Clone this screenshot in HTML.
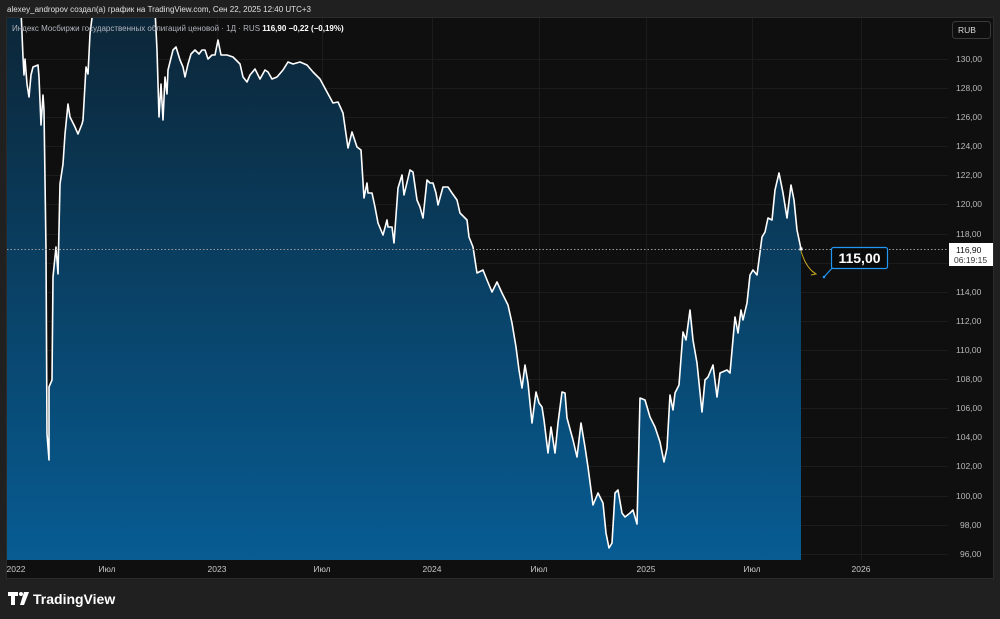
<!DOCTYPE html>
<html><head><meta charset="utf-8"><style>
html,body{margin:0;padding:0;background:#202020;width:1000px;height:619px;overflow:hidden;font-family:"Liberation Sans","Noto Sans CJK SC",sans-serif}
svg{position:absolute;left:0;top:0}
</style></head><body>
<svg width="1000" height="619" viewBox="0 0 1000 619" xmlns="http://www.w3.org/2000/svg" font-family="Liberation Sans, DejaVu Sans, sans-serif">
<defs>
<linearGradient id="g" x1="0" y1="17" x2="0" y2="560" gradientUnits="userSpaceOnUse">
<stop offset="0" stop-color="#0c2638"/><stop offset="1" stop-color="#075c93"/>
</linearGradient>
<clipPath id="c"><rect x="7" y="18" width="941" height="542"/></clipPath>
</defs>
<rect width="1000" height="619" fill="#202020"/>
<text x="7" y="12" font-size="8" fill="#e0e0e0">alexey_andropov создал(а) график на TradingView.com, Сен 22, 2025 12:40 UTC+3</text>
<rect x="6.5" y="17.5" width="987" height="561" fill="#0f0f0f" stroke="#2b2b2b"/>
<g stroke="#1c1c1c" stroke-width="1">
<path d="M7 59.5H948M7 88.5H948M7 117.5H948M7 146.5H948M7 175.5H948M7 204.5H948M7 234.5H948M7 263.5H948M7 292.5H948M7 321.5H948M7 350.5H948M7 379.5H948M7 408.5H948M7 437.5H948M7 466.5H948M7 496.5H948M7 525.5H948M7 554.5H948"/>
<path d="M107.5 18V560M217.5 18V560M322.5 18V560M432.5 18V560M539.5 18V560M646.5 18V560M752.5 18V560M861.5 18V560"/>
</g>
<g clip-path="url(#c)">
<path fill="url(#g)" d="M7,10 L21,10 L23,57 L24,75 L25,59 L27,84 L29,97 L31,75 L33,67 L38,65 L39,77 L41,125 L43,95 L44,110 L46,250 L47,434 L49,460 L49,387 L52,380 L53,277 L56,247 L58,274 L60,184 L63,164 L65,134 L68,104 L70,117 L75,127 L78,134 L82,124 L83,120 L86,67 L88,74 L90,34 L93,10 L155,10 L157,50 L159,117 L161,84 L163,120 L165,77 L167,94 L168,70 L173,50 L176,47 L180,60 L183,67 L185,77 L188,64 L191,54 L195,50 L199,54 L202,50 L205,50 L208,59 L212,55 L215,55 L218,40 L221,55 L227,55 L233,57 L240,64 L243,77 L247,82 L250,75 L255,69 L260,79 L265,70 L268,72 L272,79 L277,77 L283,70 L288,62 L293,64 L300,62 L307,65 L313,72 L320,79 L327,92 L333,103 L338,102 L343,113 L348,148 L352,132 L357,147 L361,150 L364,198 L367,183 L368,193 L372,193 L375,207 L378,223 L383,235 L387,220 L388,227 L392,227 L394,243 L398,188 L402,175 L404,195 L410,170 L413,172 L417,200 L420,207 L423,218 L427,180 L430,183 L433,183 L436,193 L438,205 L443,187 L448,187 L452,193 L457,200 L460,213 L467,220 L469,237 L473,247 L477,273 L483,270 L487,280 L492,292 L497,282 L502,293 L508,305 L512,323 L516,347 L519,370 L522,388 L525,365 L528,383 L532,423 L536,392 L539,403 L542,407 L544,420 L548,453 L551,427 L555,453 L558,423 L562,392 L565,393 L567,418 L573,440 L577,457 L581,423 L585,447 L588,467 L593,505 L598,493 L603,503 L606,533 L609,548 L612,543 L615,493 L618,490 L622,513 L625,517 L630,513 L633,510 L637,524 L640,398 L645,400 L650,417 L655,427 L660,442 L664,462 L667,448 L670,395 L673,410 L675,393 L679,385 L683,332 L686,340 L690,310 L693,340 L697,363 L702,412 L705,380 L708,377 L713,365 L717,397 L720,373 L727,370 L730,373 L735,317 L738,333 L741,310 L743,320 L747,303 L750,275 L753,270 L757,275 L762,237 L765,232 L768,218 L772,220 L775,190 L779,173 L783,193 L787,218 L791,185 L794,200 L797,230 L801,249 L801,560 L7,560 Z"/>
<path fill="none" stroke="#fff" stroke-width="1.6" stroke-linejoin="round" d="M21,10 L23,57 L24,75 L25,59 L27,84 L29,97 L31,75 L33,67 L38,65 L39,77 L41,125 L43,95 L44,110 L46,250 L47,434 L49,460 L49,387 L52,380 L53,277 L56,247 L58,274 L60,184 L63,164 L65,134 L68,104 L70,117 L75,127 L78,134 L82,124 L83,120 L86,67 L88,74 L90,34 L93,10 M155,10 L157,50 L159,117 L161,84 L163,120 L165,77 L167,94 L168,70 L173,50 L176,47 L180,60 L183,67 L185,77 L188,64 L191,54 L195,50 L199,54 L202,50 L205,50 L208,59 L212,55 L215,55 L218,40 L221,55 L227,55 L233,57 L240,64 L243,77 L247,82 L250,75 L255,69 L260,79 L265,70 L268,72 L272,79 L277,77 L283,70 L288,62 L293,64 L300,62 L307,65 L313,72 L320,79 L327,92 L333,103 L338,102 L343,113 L348,148 L352,132 L357,147 L361,150 L364,198 L367,183 L368,193 L372,193 L375,207 L378,223 L383,235 L387,220 L388,227 L392,227 L394,243 L398,188 L402,175 L404,195 L410,170 L413,172 L417,200 L420,207 L423,218 L427,180 L430,183 L433,183 L436,193 L438,205 L443,187 L448,187 L452,193 L457,200 L460,213 L467,220 L469,237 L473,247 L477,273 L483,270 L487,280 L492,292 L497,282 L502,293 L508,305 L512,323 L516,347 L519,370 L522,388 L525,365 L528,383 L532,423 L536,392 L539,403 L542,407 L544,420 L548,453 L551,427 L555,453 L558,423 L562,392 L565,393 L567,418 L573,440 L577,457 L581,423 L585,447 L588,467 L593,505 L598,493 L603,503 L606,533 L609,548 L612,543 L615,493 L618,490 L622,513 L625,517 L630,513 L633,510 L637,524 L640,398 L645,400 L650,417 L655,427 L660,442 L664,462 L667,448 L670,395 L673,410 L675,393 L679,385 L683,332 L686,340 L690,310 L693,340 L697,363 L702,412 L705,380 L708,377 L713,365 L717,397 L720,373 L727,370 L730,373 L735,317 L738,333 L741,310 L743,320 L747,303 L750,275 L753,270 L757,275 L762,237 L765,232 L768,218 L772,220 L775,190 L779,173 L783,193 L787,218 L791,185 L794,200 L797,230 L801,249"/>
</g>
<path d="M7 249.5H948" stroke="#9a9a9a" stroke-width="1" stroke-dasharray="1.5 2"/>
<rect x="799.5" y="247.5" width="3" height="3" fill="#fff"/>
<text x="12" y="31" font-size="8" fill="#b2b5be">Индекс Мосбиржи государственных облигаций ценовой · 1Д · RUS <tspan fill="#fff" font-weight="bold">116,90 −0,22 (−0,19%)</tspan></text>
<rect x="952.5" y="21.5" width="38" height="17" rx="3" fill="#0f0f0f" stroke="#3a3a3a"/>
<text x="958" y="33" font-size="8.5" fill="#ddd">RUB</text>
<g font-size="8.5" fill="#b8b8b8">
<text x="956" y="62">130,00</text><text x="956" y="91">128,00</text><text x="956" y="120">126,00</text><text x="956" y="149">124,00</text><text x="956" y="178">122,00</text><text x="956" y="207">120,00</text><text x="956" y="237">118,00</text><text x="956" y="295">114,00</text><text x="956" y="324">112,00</text><text x="956" y="353">110,00</text><text x="956" y="382">108,00</text><text x="956" y="411">106,00</text><text x="956" y="440">104,00</text><text x="956" y="469">102,00</text><text x="956" y="499">100,00</text><text x="960" y="528">98,00</text><text x="960" y="557">96,00</text>
</g>
<rect x="949" y="243" width="44" height="23" fill="#fff"/>
<text x="956" y="253" font-size="8.5" fill="#111">116,90</text>
<text x="954" y="263" font-size="8.5" fill="#333">06:19:15</text>
<path d="M801 251 Q806 268 816 274" fill="none" stroke="#c8a81e" stroke-width="1"/>
<path d="M812 271 L816 274 L811 275" fill="none" stroke="#c8a81e" stroke-width="1"/>
<path d="M824 277 L834 266" stroke="#2196f3" stroke-width="1.2"/>
<circle cx="824" cy="277" r="1.3" fill="#2196f3"/>
<rect x="831.5" y="247.5" width="56" height="21" rx="2" fill="#0a0a0a" stroke="#2196f3" stroke-width="1.2"/>
<text x="859.5" y="263" font-size="14" font-weight="bold" fill="#fff" text-anchor="middle">115,00</text>
<g font-size="8.5" fill="#c8c8c8" text-anchor="middle">
<text x="16" y="572">2022</text><text x="107" y="572">Июл</text><text x="217" y="572">2023</text><text x="322" y="572">Июл</text><text x="432" y="572">2024</text><text x="539" y="572">Июл</text><text x="646" y="572">2025</text><text x="752" y="572">Июл</text><text x="861" y="572">2026</text>
</g>
<g fill="#fff">
<path d="M8 592h10v4h-3v9h-4v-9h-3z"/>
<circle cx="21" cy="594" r="2"/>
<path d="M24 592h5l-5 13h-4z"/>
</g>
<text x="33" y="604" font-size="14" font-weight="bold" fill="#fff">TradingView</text>
</svg>
</body></html>
